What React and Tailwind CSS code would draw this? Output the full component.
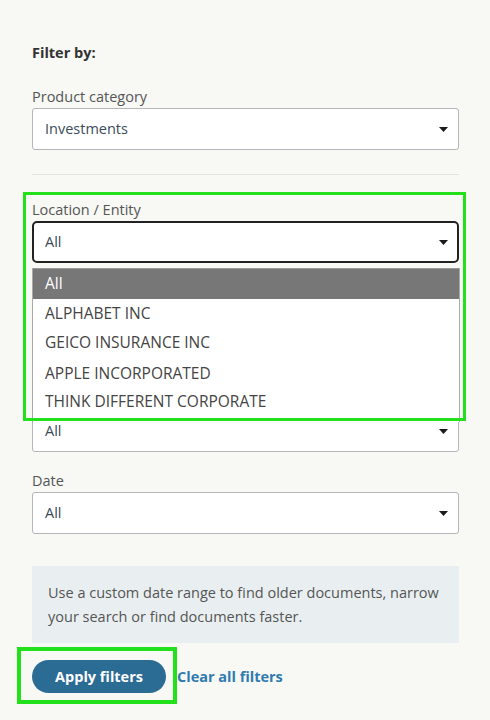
import React from "react";

function Caret() {
  return (
    <svg width="9" height="5" viewBox="0 0 9 5" className="shrink-0">
      <path d="M0 0h9L4.5 5z" fill="#1a1a1a" />
    </svg>
  );
}

function SelectBox({ value, focused = false }) {
  return (
    <div
      className={
        focused
          ? "flex h-[42px] items-center justify-between rounded-[5px] border-2 border-[#222] bg-white pl-[11px] pr-[9px]"
          : "flex h-[42px] items-center justify-between rounded-[3px] border border-[#b3b7bb] bg-white pl-[12px] pr-[10px]"
      }
    >
      <span className="text-[14.5px] text-[#3b4b5a]">{value}</span>
      <Caret />
    </div>
  );
}

function Field({ label, value, focused, className = "" }) {
  return (
    <div className={"flex flex-col " + className}>
      {label ? (
        <label className="mb-[1px] h-[20px] text-[14.5px] leading-[20px] text-[#555]">{label}</label>
      ) : null}
      <SelectBox value={value} focused={focused} />
    </div>
  );
}

const options = [
  { name: "ALPHABET INC", h: "h-[29px]" },
  { name: "GEICO INSURANCE INC", h: "h-[30px]" },
  { name: "APPLE INCORPORATED", h: "h-[31px]" },
  { name: "THINK DIFFERENT CORPORATE", h: "h-[25px]" },
];

export default function App() {
  return (
    <div
      className="relative min-h-[720px] w-[490px] bg-[#f8f8f5] px-[32px] pt-[43px]"
      style={{ fontFamily: '"Open Sans", "Noto Sans", sans-serif' }}
    >
      <h2 className="h-[20px] text-[14.5px] font-bold leading-[20px] text-[#333]">Filter by:</h2>

      <Field label="Product category" value="Investments" className="mt-[24px] w-[427px]" />

      <div className="mt-[24px] h-px w-[427px] bg-[#e3e3e0]" />

      {/* Location field with its option list open */}
      <div className="relative mt-[25px] w-[427px]">
        <Field label="Location / Entity" value="All" focused />
        <ul className="absolute left-0 top-[68px] z-10 w-[428px] border-x border-[#a9a9a9] bg-white pb-[8px] text-[15.5px] text-[#444]">
          <li className="flex h-[31px] items-center border-t border-[#9a9a9a] bg-[#777] pl-[12px] text-white">All</li>
          {options.map((o) => (
            <li key={o.name} className={"flex items-center pl-[12px] " + o.h}>
              {o.name}
            </li>
          ))}
        </ul>
      </div>

      <Field value="All" className="mt-[147px] w-[427px]" />

      <Field label="Date" value="All" className="mt-[19px] w-[427px]" />

      <div className="mt-[32px] w-[427px] bg-[#e9eff1] px-[16px] pb-[14px] pt-[15px] text-[14.5px] leading-[24px] text-[#555]">
        Use a custom date range to find older documents, narrow your search or find documents faster.
      </div>

      <div className="mt-[17px] flex items-center">
        <button className="h-[33px] w-[134px] rounded-full bg-[#2b6c95] text-[14.5px] font-bold text-white">
          Apply filters
        </button>
        <a className="ml-[11px] text-[14.5px] font-bold text-[#2f7bb0]">Clear all filters</a>
      </div>

      {/* highlight frames */}
      <div className="pointer-events-none absolute left-[23px] top-[192px] z-20 h-[229px] w-[443px] border-[3px] border-[#22e01a]" />
      <div className="pointer-events-none absolute left-[17px] top-[647px] z-20 h-[57px] w-[160px] border-[4px] border-[#22e01a]" />
    </div>
  );
}
